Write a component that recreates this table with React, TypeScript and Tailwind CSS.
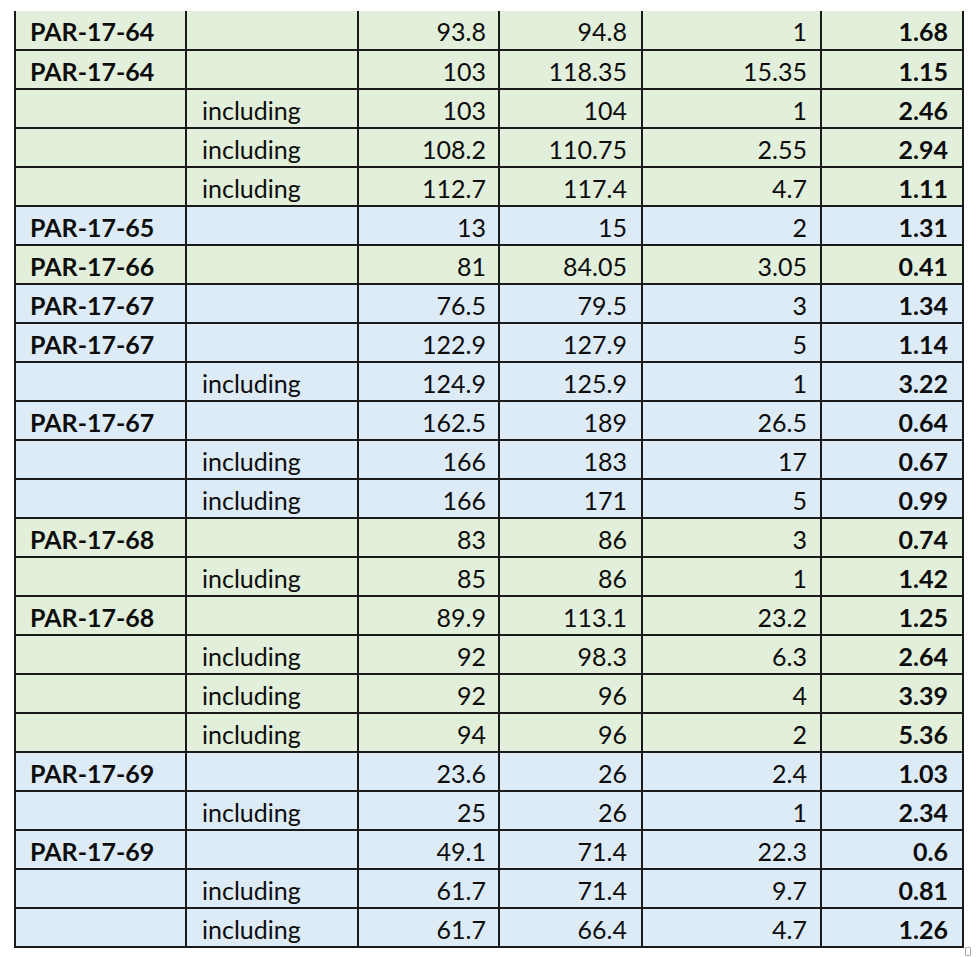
import React from 'react'

type Row = [string, string, string, string, string, string, 'g' | 'b']

const rows: Row[] = [
  ['PAR-17-64', '', '93.8', '94.8', '1', '1.68', 'g'],
  ['PAR-17-64', '', '103', '118.35', '15.35', '1.15', 'g'],
  ['', 'including', '103', '104', '1', '2.46', 'g'],
  ['', 'including', '108.2', '110.75', '2.55', '2.94', 'g'],
  ['', 'including', '112.7', '117.4', '4.7', '1.11', 'g'],
  ['PAR-17-65', '', '13', '15', '2', '1.31', 'b'],
  ['PAR-17-66', '', '81', '84.05', '3.05', '0.41', 'g'],
  ['PAR-17-67', '', '76.5', '79.5', '3', '1.34', 'b'],
  ['PAR-17-67', '', '122.9', '127.9', '5', '1.14', 'b'],
  ['', 'including', '124.9', '125.9', '1', '3.22', 'b'],
  ['PAR-17-67', '', '162.5', '189', '26.5', '0.64', 'b'],
  ['', 'including', '166', '183', '17', '0.67', 'b'],
  ['', 'including', '166', '171', '5', '0.99', 'b'],
  ['PAR-17-68', '', '83', '86', '3', '0.74', 'g'],
  ['', 'including', '85', '86', '1', '1.42', 'g'],
  ['PAR-17-68', '', '89.9', '113.1', '23.2', '1.25', 'g'],
  ['', 'including', '92', '98.3', '6.3', '2.64', 'g'],
  ['', 'including', '92', '96', '4', '3.39', 'g'],
  ['', 'including', '94', '96', '2', '5.36', 'g'],
  ['PAR-17-69', '', '23.6', '26', '2.4', '1.03', 'b'],
  ['', 'including', '25', '26', '1', '2.34', 'b'],
  ['PAR-17-69', '', '49.1', '71.4', '22.3', '0.6', 'b'],
  ['', 'including', '61.7', '71.4', '9.7', '0.81', 'b'],
  ['', 'including', '61.7', '66.4', '4.7', '1.26', 'b'],
]

export default function App() {
  return (
    <div className="relative w-[980px] h-[957px] bg-white font-['Lato',sans-serif] text-[25px] text-[#0d0d0d]">
      <table className="absolute left-[14px] top-[11px] border-collapse">
        <colgroup>
          <col className="w-[171px]" />
          <col className="w-[172px]" />
          <col className="w-[141px]" />
          <col className="w-[143px]" />
          <col className="w-[179px]" />
          <col className="w-[142px]" />
        </colgroup>
        <tbody>
          {rows.map((r, i) => (
            <tr key={i} className={r[6] === 'g' ? 'bg-[#e2efda]' : 'bg-[#ddebf7]'}>
              <Cell first={i === 0} className="pl-[14px] font-bold">{r[0]}</Cell>
              <Cell first={i === 0} className="pl-[15px]">{r[1]}</Cell>
              <Cell first={i === 0} className="pr-[12px] text-right">{r[2]}</Cell>
              <Cell first={i === 0} className="pr-[14px] text-right">{r[3]}</Cell>
              <Cell first={i === 0} className="pr-[13px] text-right">{r[4]}</Cell>
              <Cell first={i === 0} className="pr-[14px] text-right font-bold">{r[5]}</Cell>
            </tr>
          ))}
        </tbody>
      </table>
      {/* sheet resize handle */}
      <div className="absolute left-[965px] top-[947px] w-[6px] h-[9px] border border-[#aaa] rounded-[1px]" />
    </div>
  )
}

function Cell({ children, className, first }: { children: React.ReactNode; className: string; first: boolean }) {
  return (
    <td className={`h-[39px] p-0 pt-[3px] leading-none whitespace-nowrap border-2 border-[#1a1a1a] ${first ? 'border-t-0' : ''} ${className}`}>
      {children}
    </td>
  )
}
